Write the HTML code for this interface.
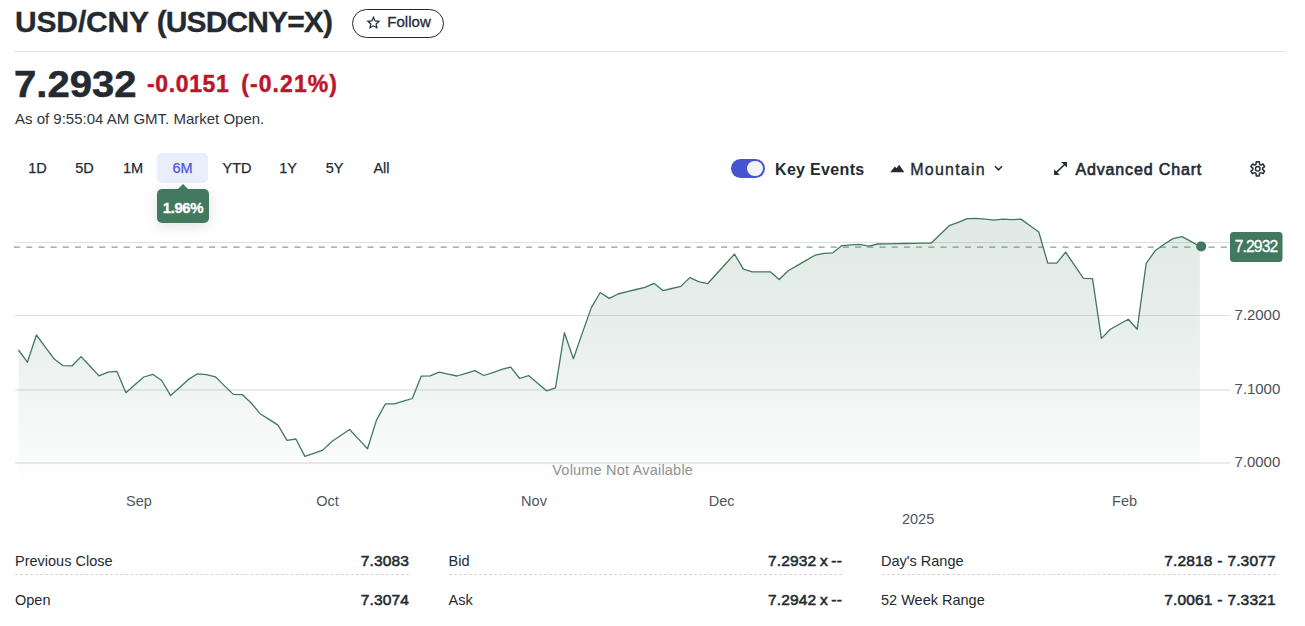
<!DOCTYPE html>
<html lang="en"><head><meta charset="utf-8"><title>USD/CNY (USDCNY=X)</title>
<style>
*{box-sizing:border-box;margin:0;padding:0}
html,body{width:1305px;height:626px;background:#fff;overflow:hidden}
body{font-family:"Liberation Sans",sans-serif;color:#232a31;position:relative}
.abs{position:absolute;white-space:nowrap;line-height:1}
h1{position:absolute;left:15px;top:5px;font-size:30px;font-weight:700;line-height:34px;white-space:nowrap;color:#232a31;letter-spacing:-0.6px;-webkit-text-stroke:0.3px #232a31}
.follow{position:absolute;left:352px;top:9px;width:92px;height:29px;border:1px solid #232a31;border-radius:14.5px;font-size:15px;font-weight:500;line-height:1;color:#232a31;letter-spacing:0.03px;-webkit-text-stroke:0.3px #232a31}
.follow span{position:absolute;left:34.3px;top:4.4px}
.hr{position:absolute;left:14px;top:51px;width:1272px;height:1px;background:#e0e4e9}
.price{left:14.3px;top:66px;font-size:37px;font-weight:700;color:#232a31;letter-spacing:0px;-webkit-text-stroke:0.5px #232a31;transform:scaleX(1.083);transform-origin:0 0}
.chg{top:73.4px;font-size:23px;font-weight:700;color:#bd152c;-webkit-text-stroke:0.45px #bd152c}
.asof{left:15px;top:110.6px;font-size:15px;color:#30363d}
.tab{top:161px;font-size:14.5px;font-weight:500;color:#232a31;transform:translateX(-50%);-webkit-text-stroke:0.25px currentColor}
.tabsel{position:absolute;left:157px;top:153px;width:51px;height:30px;border-radius:5px;background:#e8effb}
.tip{position:absolute;left:157px;top:189px;width:52px;height:34px;border-radius:5px;background:#42795f;box-shadow:0 3px 14px rgba(0,0,0,.13);color:#fff;font-weight:700;font-size:15px;line-height:37px;text-align:center;letter-spacing:-0.42px;-webkit-text-stroke:0.3px #fff}
.tip:before{content:"";position:absolute;left:20px;top:-5px;border-left:6px solid transparent;border-right:6px solid transparent;border-bottom:6px solid #42795f}
.toggle{position:absolute;left:731px;top:159px;width:34px;height:19px;border-radius:9.5px;background:#4654d1}
.toggle i{position:absolute;right:2px;top:1.6px;width:15.8px;height:15.8px;border-radius:8px;background:#f3f4f8}
.ctl{top:161px;font-size:16px;color:#232a31}
.lab{font-size:14.5px;color:#232a31}
.val{font-size:15.5px;font-weight:400;-webkit-text-stroke:0.55px #232a31;color:#232a31;text-align:right;letter-spacing:0.15px;word-spacing:0.3px;margin-top:-1px}
.dash{position:absolute;height:0;border-top:1px dashed #d4d8de}
svg text{font-family:"Liberation Sans",sans-serif}
</style></head><body>
<h1><span style="letter-spacing:-0.15px">USD/CNY</span><span style="letter-spacing:-0.6px"> </span><span style="letter-spacing:-0.88px">(USDCNY=X)</span></h1>
<div class="follow"><span>Follow</span></div>
<svg class="abs" style="left:360px;top:10px" width="28" height="26" viewBox="360 10 28 26"><path d="M373.45 17.20 L371.83 20.88 L367.84 21.28 L370.83 23.95 L369.98 27.87 L373.45 25.85 L376.92 27.87 L376.07 23.95 L379.06 21.28 L375.07 20.88 Z" fill="none" stroke="#232a31" stroke-width="1.2" stroke-linejoin="miter"/></svg>
<div class="hr"></div>
<div class="abs price">7.2932</div>
<div class="abs chg" style="left:147px;letter-spacing:0.63px">-0.0151</div>
<div class="abs chg" style="left:241.3px;letter-spacing:1.07px">(-0.21%)</div>
<div class="abs asof">As of 9:55:04 AM GMT. Market Open.</div>

<div class="tabsel"></div>
<div class="abs tab" style="left:37.5px">1D</div>
<div class="abs tab" style="left:84.5px">5D</div>
<div class="abs tab" style="left:133px">1M</div>
<div class="abs tab" style="left:182.5px;color:#4a57dc">6M</div>
<div class="abs tab" style="left:237px">YTD</div>
<div class="abs tab" style="left:288px">1Y</div>
<div class="abs tab" style="left:334.5px">5Y</div>
<div class="abs tab" style="left:381.5px">All</div>
<div class="tip">1.96%</div>

<div class="toggle"><i></i></div>
<div class="abs ctl" style="left:775px;top:162px;font-weight:700;letter-spacing:0.33px">Key Events</div>
<svg class="abs" style="left:889px;top:163px" width="17" height="11" viewBox="889 163 17 11"><path d="M890.2 172.2 L894.9 166.5 L896.5 168.3 L899.2 164.8 L904.3 172.2 Z" fill="#232a31"/></svg>
<div class="abs ctl" style="left:910.3px;top:162px;font-weight:500;font-size:16px;letter-spacing:1.22px;-webkit-text-stroke:0.35px #232a31">Mountain</div>
<svg class="abs" style="left:994px;top:165px" width="9" height="7" viewBox="0 0 9 7"><path d="M1 1.2 L4.5 4.8 L8 1.2" fill="none" stroke="#232a31" stroke-width="1.5"/></svg>
<svg class="abs" style="left:1050px;top:158px" width="22" height="22" viewBox="1050 158 22 22"><path d="M1061.2 162.1 H1067 V167.6 Z M1054.1 169.2 V174.9 H1059.8 Z" fill="#232a31"/><path d="M1056.3 172.4 L1064.9 164.2" stroke="#232a31" stroke-width="1.5" fill="none"/></svg>
<div class="abs ctl" style="left:1075.5px;top:162px;font-weight:400;-webkit-text-stroke:0.6px #232a31;letter-spacing:0.85px">Advanced Chart</div>
<svg class="abs" style="left:1245px;top:156px" width="26" height="26" viewBox="0 0 26 26"><path d="M14.51 8.28 L14.25 5.81 L11.25 5.81 L10.99 8.28 L9.67 9.04 L7.40 8.03 L5.90 10.63 L7.91 12.08 L7.91 13.62 L5.90 15.07 L7.40 17.67 L9.67 16.66 L10.99 17.42 L11.25 19.89 L14.25 19.89 L14.51 17.42 L15.83 16.66 L18.10 17.67 L19.60 15.07 L17.59 13.62 L17.59 12.08 L19.60 10.63 L18.10 8.03 L15.83 9.04 Z" fill="none" stroke="#232a31" stroke-width="1.5" stroke-linejoin="round"/><circle cx="12.75" cy="12.85" r="2.3" fill="none" stroke="#232a31" stroke-width="1.4"/></svg>

<svg class="abs" style="left:0;top:195px" width="1305" height="340" viewBox="0 195 1305 340">
<defs><linearGradient id="g" x1="0" y1="215" x2="0" y2="485" gradientUnits="userSpaceOnUse"><stop offset="0" stop-color="#41785f" stop-opacity="0.16"/><stop offset="0.44" stop-color="#41785f" stop-opacity="0.12"/><stop offset="0.92" stop-color="#41785f" stop-opacity="0.022"/><stop offset="1" stop-color="#41785f" stop-opacity="0"/></linearGradient></defs>
<rect x="15" y="242" width="1215" height="1" fill="#dedfe5"/>
<rect x="15" y="315" width="1215" height="1" fill="#dedfe5"/>
<rect x="15" y="389" width="1215" height="2" fill="#e9eaee"/>
<rect x="15" y="462" width="1215" height="2" fill="#e9eaee"/>
<path d="M18.5 350.0 L27.4 362.2 L36.4 335.0 L45.3 347.05 L54.3 359.1 L63.2 365.7 L72.2 365.8 L81.1 356.6 L90.1 366.25 L99.0 375.9 L108.0 372.1 L116.9 371.3 L125.9 392.7 L134.8 384.85 L143.8 377.0 L152.8 374.3 L161.7 380.5 L170.6 395.6 L179.6 387.5 L188.5 379.4 L197.5 373.8 L206.4 374.6 L215.4 376.8 L224.3 385.6 L233.3 394.4 L242.2 394.6 L251.2 403.0 L260.1 413.7 L269.1 419.4 L278.0 425.1 L287.0 440.4 L295.9 439.0 L304.9 456.4 L313.8 453.3 L322.8 450.1 L331.8 441.5 L340.7 435.5 L349.6 429.5 L358.6 439.1 L367.5 448.7 L376.5 420.1 L385.4 403.8 L394.4 403.8 L403.3 401.2 L412.3 398.5 L421.2 376.2 L430.2 375.9 L439.1 372.2 L448.1 374.1 L457.0 376.0 L466.0 373.3 L474.9 370.6 L483.9 375.5 L492.8 372.6 L501.8 369.3 L510.7 367.1 L519.7 378.5 L528.6 375.6 L537.6 383.2 L546.5 390.8 L555.5 387.9 L564.4 332.7 L573.4 358.7 L582.3 333.1 L591.3 307.6 L600.2 292.5 L609.2 298.4 L618.1 294.0 L627.1 291.7 L636.0 289.5 L645.0 287.4 L653.9 283.3 L662.9 290.6 L671.8 288.5 L680.8 286.4 L689.8 277.6 L698.7 281.7 L707.6 283.7 L716.6 273.8 L725.5 264.0 L734.5 254.1 L743.4 269.1 L752.4 271.9 L761.3 271.9 L770.3 271.8 L779.2 279.5 L788.2 270.8 L797.1 265.6 L806.1 260.4 L815.0 255.2 L824.0 253.4 L832.9 252.8 L841.9 245.6 L850.8 244.9 L859.8 244.3 L868.7 246.2 L877.7 244.0 L886.6 243.85 L895.6 243.7 L904.5 243.5 L913.5 243.35 L922.4 243.2 L931.4 243.0 L940.3 234.3 L949.3 225.7 L958.2 222.4 L967.2 218.6 L976.1 218.4 L985.1 219.1 L994.0 220.1 L1003.0 219.1 L1011.9 219.7 L1020.9 219.1 L1029.8 225.5 L1038.8 232.0 L1047.8 263.2 L1056.7 263.2 L1065.6 252.2 L1074.6 265.3 L1083.5 278.3 L1092.5 278.7 L1101.4 338.4 L1110.4 329.2 L1119.3 324.3 L1128.3 319.3 L1137.2 329.2 L1146.2 263.4 L1155.1 250.8 L1164.1 244.3 L1173.0 238.6 L1182.0 236.6 L1190.9 241.4 L1199.9 246.5 L1199.9 485 L18.5 485 Z" fill="url(#g)"/>
<path d="M18.5 350.0 L27.4 362.2 L36.4 335.0 L45.3 347.05 L54.3 359.1 L63.2 365.7 L72.2 365.8 L81.1 356.6 L90.1 366.25 L99.0 375.9 L108.0 372.1 L116.9 371.3 L125.9 392.7 L134.8 384.85 L143.8 377.0 L152.8 374.3 L161.7 380.5 L170.6 395.6 L179.6 387.5 L188.5 379.4 L197.5 373.8 L206.4 374.6 L215.4 376.8 L224.3 385.6 L233.3 394.4 L242.2 394.6 L251.2 403.0 L260.1 413.7 L269.1 419.4 L278.0 425.1 L287.0 440.4 L295.9 439.0 L304.9 456.4 L313.8 453.3 L322.8 450.1 L331.8 441.5 L340.7 435.5 L349.6 429.5 L358.6 439.1 L367.5 448.7 L376.5 420.1 L385.4 403.8 L394.4 403.8 L403.3 401.2 L412.3 398.5 L421.2 376.2 L430.2 375.9 L439.1 372.2 L448.1 374.1 L457.0 376.0 L466.0 373.3 L474.9 370.6 L483.9 375.5 L492.8 372.6 L501.8 369.3 L510.7 367.1 L519.7 378.5 L528.6 375.6 L537.6 383.2 L546.5 390.8 L555.5 387.9 L564.4 332.7 L573.4 358.7 L582.3 333.1 L591.3 307.6 L600.2 292.5 L609.2 298.4 L618.1 294.0 L627.1 291.7 L636.0 289.5 L645.0 287.4 L653.9 283.3 L662.9 290.6 L671.8 288.5 L680.8 286.4 L689.8 277.6 L698.7 281.7 L707.6 283.7 L716.6 273.8 L725.5 264.0 L734.5 254.1 L743.4 269.1 L752.4 271.9 L761.3 271.9 L770.3 271.8 L779.2 279.5 L788.2 270.8 L797.1 265.6 L806.1 260.4 L815.0 255.2 L824.0 253.4 L832.9 252.8 L841.9 245.6 L850.8 244.9 L859.8 244.3 L868.7 246.2 L877.7 244.0 L886.6 243.85 L895.6 243.7 L904.5 243.5 L913.5 243.35 L922.4 243.2 L931.4 243.0 L940.3 234.3 L949.3 225.7 L958.2 222.4 L967.2 218.6 L976.1 218.4 L985.1 219.1 L994.0 220.1 L1003.0 219.1 L1011.9 219.7 L1020.9 219.1 L1029.8 225.5 L1038.8 232.0 L1047.8 263.2 L1056.7 263.2 L1065.6 252.2 L1074.6 265.3 L1083.5 278.3 L1092.5 278.7 L1101.4 338.4 L1110.4 329.2 L1119.3 324.3 L1128.3 319.3 L1137.2 329.2 L1146.2 263.4 L1155.1 250.8 L1164.1 244.3 L1173.0 238.6 L1182.0 236.6 L1190.9 241.4 L1199.9 246.5" fill="none" stroke="#41785f" stroke-width="1.3" stroke-linejoin="round"/>
<line x1="14" y1="247.1" x2="1230" y2="247.1" stroke="#41785f" stroke-opacity="0.68" stroke-width="1.3" stroke-dasharray="6.1 6.09"/>
<circle cx="1201.2" cy="246.4" r="5" fill="#41785f"/>
<rect x="1230" y="232" width="52.5" height="30" rx="3.5" fill="#41785f"/>
<text x="1256" y="252" font-size="15.6" fill="#fff" stroke="#fff" stroke-width="0.3" text-anchor="middle" letter-spacing="-0.85">7.2932</text>
<g font-size="15" fill="#4a4f57" letter-spacing="-0.05">
<text x="1234.6" y="319.7">7.2000</text>
<text x="1234.6" y="393.9">7.1000</text>
<text x="1234.6" y="467.3">7.0000</text>
</g>
<text x="622.7" y="475" font-size="14.5" fill="#8f9296" text-anchor="middle" letter-spacing="0.2">Volume Not Available</text>
<g font-size="14.5" fill="#50565e" text-anchor="middle">
<text x="139" y="505.6">Sep</text>
<text x="327.5" y="505.6">Oct</text>
<text x="534" y="505.6">Nov</text>
<text x="721.7" y="505.6">Dec</text>
<text x="1124.6" y="505.6">Feb</text>
<text x="918.1" y="523.6">2025</text>
</g>
</svg>

<div class="abs lab" style="left:15px;top:554px">Previous Close</div>
<div class="abs val" style="right:896px;top:554px">7.3083</div>
<div class="dash" style="left:15px;top:574px;width:394px"></div>
<div class="abs lab" style="left:15px;top:593px">Open</div>
<div class="abs val" style="right:896px;top:593px">7.3074</div>

<div class="abs lab" style="left:448.5px;top:554px">Bid</div>
<div class="abs val" style="right:463px;top:554px;word-spacing:-0.9px">7.2932 x --</div>
<div class="dash" style="left:448.5px;top:574px;width:393.5px"></div>
<div class="abs lab" style="left:448.5px;top:593px">Ask</div>
<div class="abs val" style="right:463px;top:593px;word-spacing:-0.9px">7.2942 x --</div>

<div class="abs lab" style="left:881px;top:554px">Day's Range</div>
<div class="abs val" style="right:29.3px;top:554px">7.2818 - 7.3077</div>
<div class="dash" style="left:882px;top:574px;width:394px"></div>
<div class="abs lab" style="left:881px;top:593px">52 Week Range</div>
<div class="abs val" style="right:29.3px;top:593px">7.0061 - 7.3321</div>
</body></html>
